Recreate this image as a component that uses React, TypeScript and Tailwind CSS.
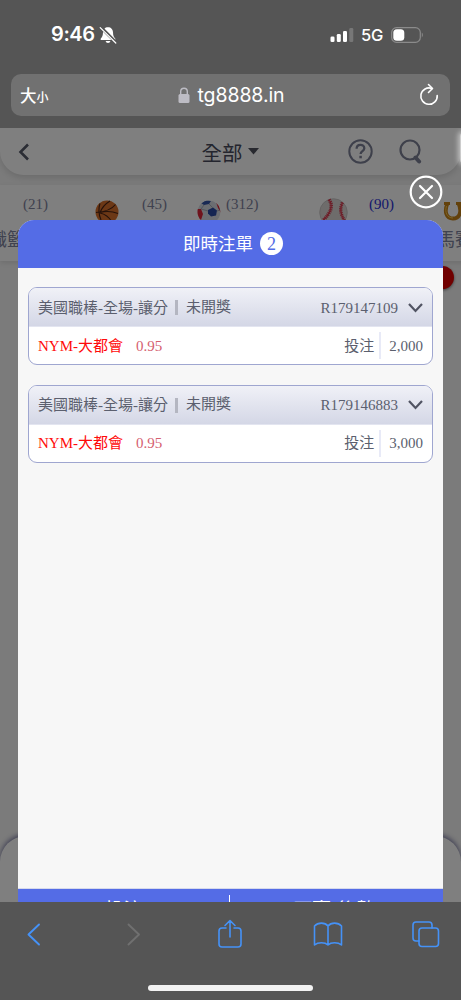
import type { ReactNode } from 'react';

interface Bet {
  id: string;
  market: string;
  status: string;
  pick: string;
  odds: string;
  stake: string;
}

const BETS: Bet[] = [
  { id: 'R179147109', market: '美國職棒-全場-讓分', status: '未開獎', pick: 'NYM-大都會', odds: '0.95', stake: '2,000' },
  { id: 'R179146883', market: '美國職棒-全場-讓分', status: '未開獎', pick: 'NYM-大都會', odds: '0.95', stake: '3,000' },
];

function StatusBar() {
  return (
    <div className="flex h-[74px] items-start justify-between pt-[22px] pr-[37px] pl-[51px]">
      <div className="flex items-center gap-[4px]">
        <span className="text-[20px] leading-[25px] font-semibold tracking-[-0.400px]">9:46</span>
        <svg width="18" height="18" viewBox="0 0 18 18" fill="none">
          <path d="M9 1.2c-3 0-4.9 2.1-5 5-.1 3.600-.7 4.700-2 6-.8.9-.4 1.800.6 1.800h12.800c1 0 1.400-.9.6-1.800-1.300-1.300-1.900-2.400-2-6-.1-2.900-2-5-5-5Z" fill="#fff" />
          <path d="M6.600 15h4.800c-.3 1.300-1.200 2-2.400 2s-2.100-.7-2.400-2Z" fill="#fff" />
          <path d="M1.700 1.200 17 16.400" stroke="#555" strokeWidth="3.200" />
          <path d="M1.200 1.600 16.800 17" stroke="#fff" strokeWidth="1.200" strokeLinecap="round" />
        </svg>
      </div>
      <div className="flex items-center pt-[3px]">
        <svg width="24" height="16" viewBox="0 0 24 16">
          <rect x="0.500" y="9.500" width="4" height="5.500" rx="1.300" fill="#fff" />
          <rect x="6.800" y="7" width="4" height="8" rx="1.300" fill="#fff" />
          <rect x="13" y="4" width="4" height="11" rx="1.300" fill="#fff" />
          <rect x="19.300" y="1" width="4" height="14" rx="1.300" fill="#777" />
        </svg>
        <span className="ml-[7px] text-[16.500px] leading-[20px] font-medium tracking-[-0.300px]">5G</span>
        <svg className="ml-[8px]" width="33" height="18" viewBox="0 0 33 18" fill="none">
          <rect x="0.700" y="1.700" width="28.600" height="14.600" rx="4.800" stroke="#8b8b8b" strokeWidth="1.200" />
          <rect x="2.300" y="3.300" width="11" height="11.400" rx="3.500" fill="#fff" />
          <path d="M30.800 6.600c1.400.8 1.400 4 0 4.800Z" fill="#8b8b8b" />
        </svg>
      </div>
    </div>
  );
}

function AddressBar() {
  return (
    <div className="mx-[11px] flex h-[42px] items-center justify-between rounded-[10px] bg-[#717171] pr-[11px] pl-[9px]">
      <div className="flex w-[40px] items-baseline font-['Noto_Sans_CJK_TC',sans-serif] font-medium">
        <span className="text-[16.500px]">大</span>
        <span className="text-[12px]">小</span>
      </div>
      <div className="flex items-center gap-[8px] pt-[2px] pl-[3px]">
        <svg className="-mt-[2px]" width="12" height="17" viewBox="0 0 12 17" fill="none">
          <path d="M2.700 8V4.500a3.300 3.300 0 0 1 6.600 0V8" stroke="#bdbcc4" strokeWidth="1.400" />
          <rect x="0.500" y="7" width="11" height="9" rx="1.500" fill="#bdbcc4" />
        </svg>
        <span className="text-[19.500px] tracking-[-0.100px]">tg8888.in</span>
      </div>
      <div className="flex w-[40px] justify-end">
        <svg width="20" height="24" viewBox="0 0 20 24" fill="none" stroke="#fff" strokeWidth="1.600" strokeLinecap="round" strokeLinejoin="round">
          <path d="M12.800 5.400A8.200 8.200 0 1 0 18.200 12.500" />
          <path d="M9.500 1.500 13.500 5.500 9.500 9.500" />
        </svg>
      </div>
    </div>
  );
}

function SiteHeader() {
  return (
    <header className="relative flex h-[47px] items-center justify-between rounded-b-[24px] bg-white pr-[39px] pl-[18px] text-[#50546a] shadow-[0_3px_6px_rgba(0,0,0,0.12)]">
      <svg width="72" height="18" viewBox="0 0 72 18" fill="none">
        <path d="M10 1.500 2.500 9 10 16.500" stroke="#565a69" strokeWidth="2.600" />
      </svg>
      <div className="flex items-center gap-[5px] pt-[2px] pl-[22px] text-[20.500px] text-[#484b5c]">
        全部
        <svg className="-mt-[2px]" width="11" height="7" viewBox="0 0 11 7">
          <path d="M0 0h11L5.500 6.500Z" fill="#50535f" />
        </svg>
      </div>
      <div className="flex items-center gap-[26px]">
        <svg width="25" height="25" viewBox="0 0 25 25" fill="none" stroke="#7c8096">
          <circle cx="12.500" cy="12.500" r="11.200" strokeWidth="2" />
          <path d="M8.600 9.800c0-5.200 7.700-5 7.700-.6 0 2.800-3.700 3-3.700 5.800" strokeWidth="2.300" />
          <path d="M12.600 16.800v2.500" strokeWidth="2.500" />
        </svg>
        <svg width="23" height="25" viewBox="0 0 23 25" fill="none" stroke="#7c8096">
          <circle cx="11" cy="11" r="9.500" strokeWidth="2.200" />
          <path d="m16.500 18.500 3.600 4" strokeWidth="4" strokeLinecap="round" />
        </svg>
      </div>
    </header>
  );
}

function Basketball() {
  return (
    <svg width="24" height="24" viewBox="0 0 24 24" fill="none">
      <circle cx="12" cy="12" r="11.500" fill="#d9702c" />
      <path d="M1 12.500C9 12 17 9 20.500 4.500M5 3.500C3 9 4 15 6 20M5 12.500c2-5 5-8.500 10-11.500M5 12.500c6-1.500 13-1 18 1M5 13c5 1 9 4 12 9" stroke="#4a2314" strokeWidth="1.100" />
    </svg>
  );
}

function SoccerBall() {
  return (
    <svg width="24" height="24" viewBox="0 0 24 24">
      <defs>
        <clipPath id="soccer">
          <circle cx="12" cy="12" r="11.500" />
        </clipPath>
      </defs>
      <g clipPath="url(#soccer)">
        <circle cx="12" cy="12" r="11.500" fill="#d8dce4" />
        <path d="m4 3 5-3 5 1-2 3-5 1Z" fill="#3455a8" />
        <path d="m11 10 5-2.500 4 3-1 5-5 1-3-3Z" fill="#2b4aa5" />
        <path d="m0 9 4 0 2 5-2 6-4-2ZM19 2l3 4 2 7-3-5Z" fill="#df2638" />
        <path d="m7 5-3 4M12 4l4 4M4 9l7 2M20 11l3-1" stroke="#9ba0ad" strokeWidth="0.800" />
      </g>
    </svg>
  );
}

function Baseball() {
  return (
    <svg width="29" height="29" viewBox="0 0 29 29" fill="none">
      <circle cx="14.500" cy="14.500" r="13.800" fill="#dcd9d7" stroke="#c4c0c0" strokeWidth="0.800" />
      <path d="M10 1.500c5 7 1 14-6 21" stroke="#d0475a" strokeWidth="3.600" strokeDasharray="1.200 0.800" />
      <path d="M23.500 4.500c-3 6-2 12 2 18" stroke="#d0475a" strokeWidth="3.400" strokeDasharray="1.200 0.800" />
      <path d="M10 1.500c5 7 1 14-6 21M23.500 4.500c-3 6-2 12 2 18" stroke="#e03b50" strokeWidth="1.200" />
    </svg>
  );
}

function Horseshoe() {
  return (
    <svg width="20" height="22" viewBox="0 0 20 22" fill="none">
      <path d="M4.500 2.500C1 10 3 17.500 10 17.500S19 10 15.500 2.500" stroke="#c68217" strokeWidth="3.800" />
      <path d="M1 2.500h6M13 2.500h6" stroke="#c68217" strokeWidth="2.800" />
      <path d="M3.500 5C1.500 11 4 17 10 17" stroke="#f5c64c" strokeWidth="1" />
    </svg>
  );
}

/** Horizontally scrolled sport list, partly hidden behind the dialog. */
function SportTabs() {
  return (
    <div className="mt-[10px] h-[76px] w-[480px] bg-[#fefefe] text-[#7f849e] shadow-[0_2px_5px_rgba(0,0,0,0.1)]">
      <div className="flex h-[42px] items-start font-['Liberation_Serif',serif] text-[15px] leading-[17px]">
        <span className="ml-[23px] w-[72px] pt-[11px]">(21)</span>
        <span className="w-[47px] pt-[15px]"><Basketball /></span>
        <span className="w-[55px] pt-[11px]">(45)</span>
        <span className="w-[29px] pt-[15px]"><SoccerBall /></span>
        <span className="w-[93px] pt-[11px]">(312)</span>
        <span className="w-[50px] pt-[13px]"><Baseball /></span>
        <span className="w-[74px] pt-[11px] text-[#292fd8]">(90)</span>
        <span className="pt-[16px]"><Horseshoe /></span>
      </div>
      <div className="-ml-[11px] flex w-[484px] justify-between text-[18px] leading-[22px]">
        <span>職籃</span>
        <span>馬賽</span>
      </div>
    </div>
  );
}

function BetCard({ bet }: { bet: Bet }) {
  return (
    <article className="h-[78px] overflow-hidden rounded-[9px] border border-[#9fa6d0] bg-white font-['Liberation_Serif','Noto_Sans_CJK_TC',serif] text-[15px] text-[#5b5f6e]">
      <div className="flex h-[39px] items-center justify-between border-b border-[#e3e5f0] bg-linear-to-b from-[#f0f1f7] to-[#d4d7e6] pr-[9px] pl-[9px]">
        <div className="flex items-center pt-[1px] leading-[20px]">
          <span>{bet.market}</span>
          <span className="mr-[8px] ml-[7px] h-[15px] w-[3px] bg-[#b4b6c1]" />
          <span className="-mt-[2px]">{bet.status}</span>
        </div>
        <div className="flex items-center gap-[10px] pt-[1px] leading-[20px]">
          <span>{bet.id}</span>
          <svg width="15" height="10" viewBox="0 0 15 10" fill="none">
            <path d="m1 1 6.500 7L14 1" stroke="#515463" strokeWidth="2.200" />
          </svg>
        </div>
      </div>
      <div className="flex h-[37px] items-center justify-between pr-[9px] pl-[9px] leading-[20px]">
        <div className="flex gap-[13px]">
          <span className="text-[#ff0a0a]">{bet.pick}</span>
          <span className="text-[#d5606f]">{bet.odds}</span>
        </div>
        <div className="flex items-center">
          <span>投注</span>
          <span className="mr-[8px] ml-[5px] h-[27px] w-[2px] bg-[#e8eaf7]" />
          <span>{bet.stake}</span>
        </div>
      </div>
    </article>
  );
}

function BetSlipDialog() {
  return (
    <section className="absolute top-[92px] bottom-0 left-[18px] flex w-[425px] flex-col overflow-hidden rounded-t-[16px] bg-[#f7f7f7]">
      <div className="flex h-[48px] shrink-0 items-center justify-center gap-[7px] bg-[#546ce6] pb-[2px] pl-[5px] text-[17.500px] text-white">
        即時注單
        <span className="flex size-[23px] items-center justify-center rounded-full bg-white pt-[2px] font-['Liberation_Serif',serif] text-[18px] leading-none text-[#546ce6]">
          {BETS.length}
        </span>
      </div>
      <div className="flex flex-1 flex-col gap-[19.500px] px-[10px] pt-[19px]">
        {BETS.map((bet) => (
          <BetCard key={bet.id} bet={bet} />
        ))}
      </div>
      <div className="h-[14px] shrink-0 overflow-hidden border-t border-[#d6d9ec] bg-[#546ce6] text-[18.500px] text-white">
        <div className="flex h-[40px] items-start pt-[6px] leading-[26px]">
          <span className="w-[211px] text-center">投注</span>
          <span className="h-[26px] w-[1px] bg-white" />
          <span className="flex-1 pr-[5px] text-center">可贏-後數</span>
        </div>
      </div>
    </section>
  );
}

function ToolbarIcon({ children, stroke = '#4592f7' }: { children: ReactNode; stroke?: string }) {
  return (
    <svg width="30" height="34" viewBox="0 0 30 34" fill="none" stroke={stroke} strokeWidth="1.600" strokeLinecap="round" strokeLinejoin="round">
      {children}
    </svg>
  );
}

function BrowserToolbar() {
  return (
    <footer className="flex h-[98px] flex-col items-center bg-[#555]">
      <div className="flex w-full items-center justify-between pt-[15px] pr-[20px] pl-[19px]">
        <ToolbarIcon>
          <path d="M20 7.500 9.500 17.500 20 27.500" strokeWidth="1.900" />
        </ToolbarIcon>
        <ToolbarIcon stroke="#707070">
          <path d="M11.500 7.500 22 17.500 11.500 27.500" strokeWidth="1.900" />
        </ToolbarIcon>
        <ToolbarIcon>
          <path d="M11 11H7a3 3 0 0 0-3 3v13a3 3 0 0 0 3 3h16a3 3 0 0 0 3-3V14a3 3 0 0 0-3-3h-4M15 20V3.500M10 8.500l5-5 5 5" />
        </ToolbarIcon>
        <ToolbarIcon>
          <path d="M15 9C12 5.200 5 5.200 1.500 9v19C5 25 12 25 15 28 18 25 25 25 28.500 28V9C25 5.200 18 5.200 15 9ZM15 9v19" />
        </ToolbarIcon>
        <ToolbarIcon>
          <path d="M8 24H5a3 3 0 0 1-3-3V8a3 3 0 0 1 3-3h13a3 3 0 0 1 3 3v3" />
          <rect x="8" y="11" width="19.500" height="18.500" rx="3" />
        </ToolbarIcon>
      </div>
      <div className="mt-[34px] h-[6px] w-[165px] rounded-full bg-[#f2f2f2]" />
    </footer>
  );
}

export default function App() {
  return (
    <div className="flex h-[1000px] w-[461px] flex-col overflow-hidden bg-[#555] font-['Noto_Sans_CJK_TC',sans-serif]">
      <div className="h-[128px] shrink-0 bg-[#555] font-['Inter','Noto_Sans_CJK_TC',sans-serif] text-white">
        <StatusBar />
        <AddressBar />
      </div>
      <main className="relative flex-1 overflow-hidden bg-[#f6f6f6]">
        <SiteHeader />
        <SportTabs />
        <div className="mt-[5px] ml-[431px] size-[23px] rounded-full bg-[#e00000] shadow-[0_1px_3px_rgba(0,0,0,0.5)]" />
        <div className="mt-[547px] h-[90px] rounded-t-[26px] bg-white shadow-[0_-2px_5px_#8080a8]" />
        <div className="absolute inset-0 bg-black/50" />
        <div className="absolute top-[5px] -right-[5px] h-[30px] w-[6px] rounded-full bg-white/60 shadow-[0_0_5px_2px_rgba(255,255,255,0.5)]" />
        <BetSlipDialog />
        <button type="button" aria-label="關閉" className="absolute top-[47px] left-[409px]">
          <svg width="34" height="34" viewBox="0 0 34 34" fill="none" stroke="#fff">
            <circle cx="17" cy="17" r="15.300" strokeWidth="2.200" />
            <path d="m11 11 12 12M23 11 11 23" strokeWidth="2.200" strokeLinecap="round" />
          </svg>
        </button>
      </main>
      <BrowserToolbar />
    </div>
  );
}
